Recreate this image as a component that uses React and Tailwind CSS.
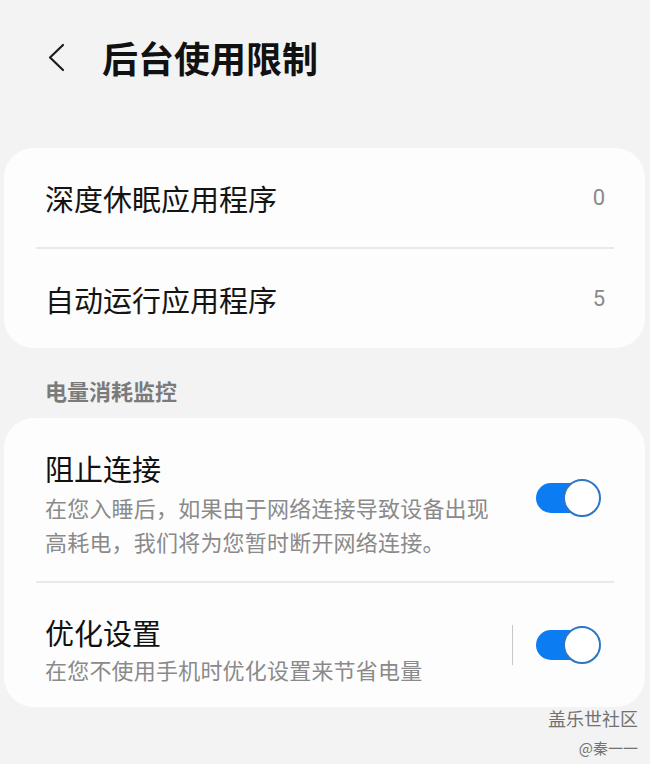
import React from "react";

const font = { fontFamily: '"Noto Sans CJK SC", "Noto Sans", sans-serif' };

const Toggle = () => (
  <div className="relative w-[65px] h-[38px] shrink-0">
    <div className="absolute left-0 top-[4px] w-[56px] h-[30px] rounded-full bg-[#0b7cf1]" />
    <div className="absolute right-0 top-0 w-[38px] h-[38px] rounded-full bg-white border-2 border-[#2c76c4]" />
  </div>
);

const Divider = () => <div className="ml-[32px] mr-[31px] h-[2px] bg-[#e9e9e9]" />;

const CountRow = ({ label, value }) => (
  <div className="flex items-center justify-between h-[99px] pl-[41px] pr-[40px]">
    <span className="text-[29px] leading-[40px] text-[#141414]">{label}</span>
    <span
      className="text-[22px] text-[#8a8a8a]"
      style={{ fontFamily: 'Roboto, "Noto Sans", sans-serif' }}
    >
      {value}
    </span>
  </div>
);

const App = () => {
  return (
    <div className="relative min-h-[764px] bg-[#f3f3f3] overflow-hidden" style={font}>
      {/* header */}
      <div className="flex items-center h-[44px] mt-[35px] pl-[47px]">
        <svg width="18" height="29" viewBox="0 0 18 29" fill="none">
          <path d="M16 2 L3 14.5 L16 27" stroke="#1c1c1c" strokeWidth="2.2" strokeLinecap="round" strokeLinejoin="round" />
        </svg>
        <h1 className="ml-[37px] text-[36px] leading-[44px] font-bold text-[#111]">后台使用限制</h1>
      </div>

      {/* card 1 */}
      <div className="mt-[69px] ml-[4px] mr-[5px] rounded-[30px] bg-[#fdfdfd]">
        <CountRow label="深度休眠应用程序" value="0" />
        <Divider />
        <CountRow label="自动运行应用程序" value="5" />
      </div>

      {/* section */}
      <div className="mt-[27px] pl-[45px] text-[22px] leading-[30px] font-bold text-[#7b7b7b]">电量消耗监控</div>

      <div className="mt-[13px] ml-[4px] mr-[5px] rounded-[30px] bg-[#fdfdfd]">
        <div className="flex items-center justify-between pl-[41px] pr-[44px] pt-[30px] pb-[23px]">
          <div className="w-[448px]">
            <div className="text-[29px] leading-[40px] text-[#111]">阻止连接</div>
            <div className="text-[22px] leading-[34px] tracking-[0.2px] text-[#8a8a8a] mt-[2px]">
              在您入睡后，如果由于网络连接导致设备出现高耗电，我们将为您暂时断开网络连接。
            </div>
          </div>
          <div className="-mt-[10px]">
            <Toggle />
          </div>
        </div>
        <Divider />
        <div className="flex items-center justify-between pl-[41px] pr-[44px] pt-[29px] pb-[21px]">
          <div>
            <div className="text-[29px] leading-[40px] text-[#111]">优化设置</div>
            <div className="text-[22px] leading-[34px] tracking-[0.2px] text-[#8a8a8a]">在您不使用手机时优化设置来节省电量</div>
          </div>
          <div className="flex items-center -mt-[8px]">
            <div className="w-[1px] h-[40px] bg-[#c8c8c8] mr-[23px]" />
            <Toggle />
          </div>
        </div>
      </div>

      {/* watermark */}
      <div className="absolute right-[12px] top-[705px] flex flex-col items-end text-[#727272]">
        <span className="text-[18px] leading-[26px]">盖乐世社区</span>
        <span className="text-[15px] leading-[22px] mt-[6px]">@秦一一</span>
      </div>
    </div>
  );
};

export default App;
